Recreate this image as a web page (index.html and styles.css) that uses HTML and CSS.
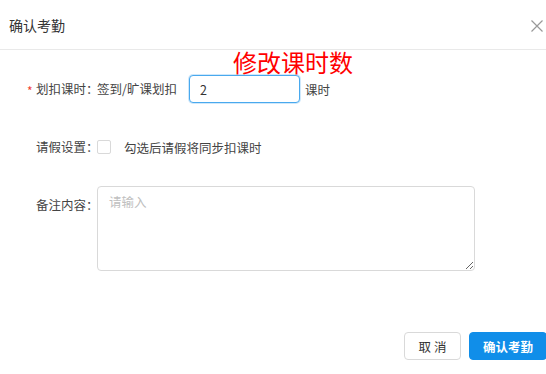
FILE: index.html
```html
<!DOCTYPE html>
<html lang="zh">
<head>
<meta charset="utf-8">
<title>确认考勤</title>
<link rel="stylesheet" href="styles.css">
</head>
<body>
<div class="dialog">
  <div class="header">
    <span class="title">确认考勤</span>
    <span class="close">
      <svg width="12" height="12" viewBox="0 0 12 12"><path d="M0.5 0.5L11.5 11.5M11.5 0.5L0.5 11.5" stroke="#999" stroke-width="1.2" fill="none"/></svg>
    </span>
  </div>
  <div class="annot">修改课时数</div>
  <div class="body">
    <div class="row row-1">
      <span class="star">*</span>
      <span class="label">划扣课时：</span>
      <span class="text">签到/旷课划扣</span>
      <input class="num" type="text" value="2">
      <span class="unit">课时</span>
    </div>
    <div class="row row-2">
      <span class="star"></span>
      <span class="label">请假设置：</span>
      <span class="checkbox"></span>
      <span class="hint">勾选后请假将同步扣课时</span>
    </div>
    <div class="row row-3">
      <span class="star"></span>
      <span class="label label-top">备注内容：</span>
      <textarea class="remark" placeholder="请输入"></textarea>
    </div>
  </div>
  <div class="footer">
    <button class="btn btn-default">取 消</button>
    <button class="btn btn-primary">确认考勤</button>
  </div>
</div>
</body>
</html>
```
FILE: styles.css
```css
html, body {
  margin: 0;
  padding: 0;
  overflow: hidden;
  background: #fff;
}
body {
  font-family: "Noto Sans CJK SC", "Noto Sans", sans-serif;
  font-size: 12.5px;
  color: #444;
}
.dialog {
  position: relative;
  width: 556px;
}
.header {
  height: 49px;
  border-bottom: 1px solid #e9e9e9;
  display: flex;
  align-items: center;
  justify-content: space-between;
  padding: 0 13px 0 9px;
}
.title {
  font-size: 14px;
  color: #333;
  line-height: 20px;
}
.close {
  display: flex;
  width: 12px;
  height: 12px;
  margin-top: 2px;
}
.annot {
  position: absolute;
  left: 233px;
  top: 48px;
  font-size: 24px;
  line-height: 28px;
  color: #ff0000;
}
.body {
  padding-top: 25px;
}
.row {
  display: flex;
  align-items: center;
  padding-left: 27px;
  height: 28px;
}
.row-2 {
  margin-top: 30px;
}
.row-3 {
  margin-top: 25px;
  height: auto;
  align-items: flex-start;
}
.star {
  width: 9px;
  color: #f04134;
  font-size: 12px;
  line-height: 28px;
  padding-top: 2px;
  height: 26px;
}
.label {
  width: 61px;
  line-height: 28px;
  white-space: nowrap;
}
.label-top {
  margin-top: 5px;
}
.text {
  width: 92px;
  line-height: 28px;
  white-space: nowrap;
}
.num {
  box-sizing: border-box;
  width: 111px;
  height: 28px;
  border: 1px solid #49a9ee;
  border-radius: 4px;
  box-shadow: 0 0 0 1px rgba(16, 142, 233, 0.2);
  padding: 0 10px;
  font-family: inherit;
  font-size: 12.5px;
  color: #333;
  outline: none;
  margin: 0;
}
.unit {
  margin-left: 5px;
}
.checkbox {
  box-sizing: border-box;
  width: 14px;
  height: 14px;
  border: 1px solid #d9d9d9;
  border-radius: 2px;
  background: #fff;
}
.hint {
  margin-left: 13px;
}
.remark {
  box-sizing: border-box;
  width: 378px;
  height: 85px;
  border: 1px solid #d9d9d9;
  border-radius: 4px;
  padding: 5px 11px;
  font-family: inherit;
  font-size: 12.5px;
  line-height: 20px;
  color: #333;
  margin: 0;
  outline: none;
}
.remark::placeholder {
  color: #bfbfbf;
}
.footer {
  display: flex;
  justify-content: flex-end;
  gap: 8px;
  margin-top: 61px;
  padding-right: 9px;
}
.btn {
  height: 28px;
  border-radius: 4px;
  font-family: inherit;
  font-size: 12.5px;
  padding: 0 15px;
  margin: 0;
  cursor: pointer;
}
.btn-default {
  width: 57px;
  background: #fff;
  border: 1px solid #d9d9d9;
  color: #333;
  padding: 0;
}
.btn-primary {
  width: 78px;
  background: #108ee9;
  border: 1px solid #108ee9;
  color: #fff;
  font-weight: bold;
  padding: 0;
}
```
